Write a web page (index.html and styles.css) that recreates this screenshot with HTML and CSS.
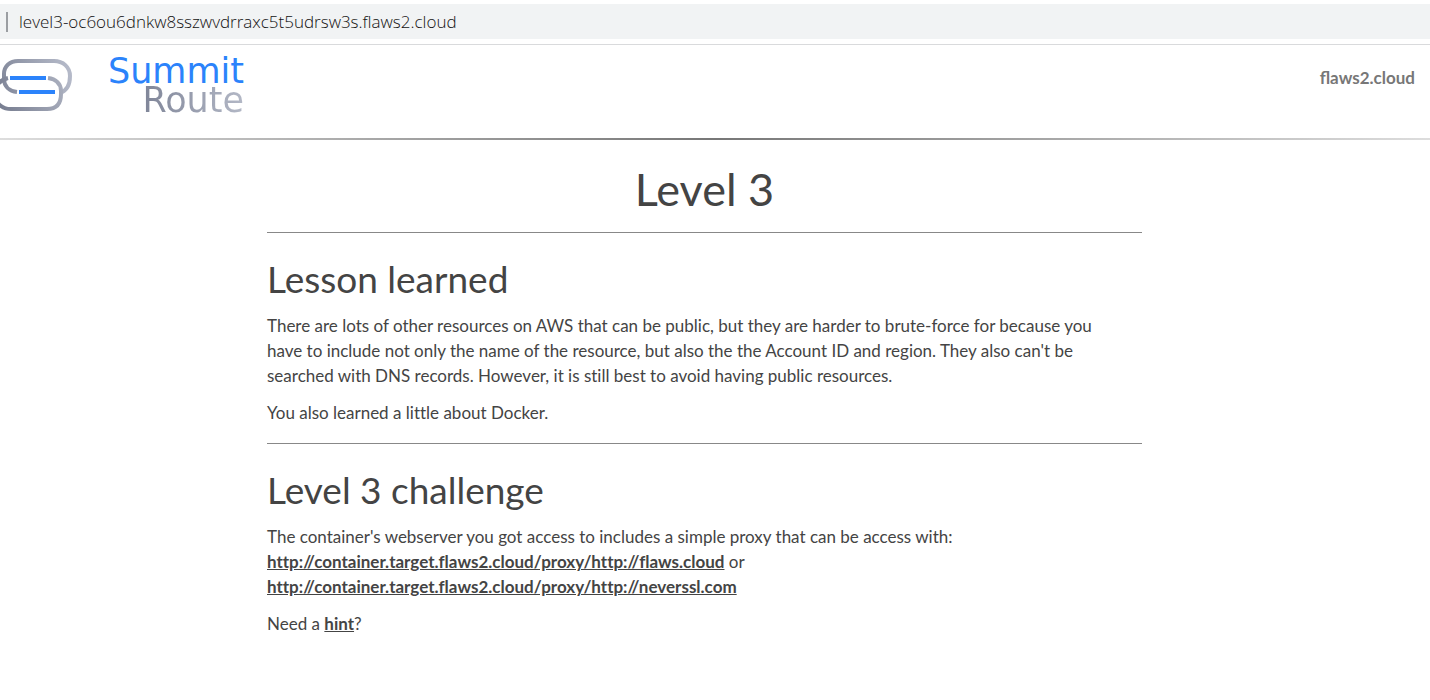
FILE: index.html
```html
<!DOCTYPE html>
<html lang="en">
<head>
<meta charset="utf-8">
<title>Level 3</title>
<link rel="stylesheet" href="styles.css">
</head>
<body>
<div class="address-bar"><span class="address">level3-oc6ou6dnkw8sszwvdrraxc5t5udrsw3s.flaws2.cloud</span></div>
<header class="site-header">
  <div class="brand">
    <svg class="brand-mark" width="72" height="56" viewBox="0 0 72 56" aria-hidden="true">
      <defs>
        <linearGradient id="upper" gradientUnits="userSpaceOnUse" x1="4" y1="28" x2="70" y2="12"><stop offset="0" stop-color="#858b9d"/><stop offset="1" stop-color="#b5bac9"/></linearGradient>
        <linearGradient id="lower" gradientUnits="userSpaceOnUse" x1="0" y1="52" x2="62" y2="30"><stop offset="0" stop-color="#777d90"/><stop offset="1" stop-color="#a8adbc"/></linearGradient>
      </defs>
      <g fill="none" stroke-width="4">
        <path stroke="url(#upper)" d="M17 35C9 34 4 29 4 22V17C4 9 10 4 18 4H54C63 4 70 10 70 19C70 28 66 34 60 36"/>
        <path stroke="url(#lower)" d="M48 21C56 22 61 27 61 34V37C61 47 56 52 47 52H11C2 52-5 46-5 37C-5 28 0 23 8 21"/>
      </g>
      <path fill="#2b83fb" d="M10 19h36v4H10zM19 33h36v4H19z"/>
    </svg>
    <div class="brand-name"><span class="brand-top">Summit</span><span class="brand-bottom">Route</span></div>
  </div>
  <a class="home-link" href="#">flaws2.cloud</a>
</header>
<main class="page">
  <article class="content">
    <h1>Level 3</h1>
    <hr>
    <h2>Lesson learned</h2>
    <p>There are lots of other resources on AWS that can be public, but they are harder to brute-force for because you have to include not only the name of the resource, but also the the Account ID and region. They also can't be searched with DNS records. However, it is still best to avoid having public resources.</p>
    <p>You also learned a little about Docker.</p>
    <hr>
    <h2>Level 3 challenge</h2>
    <p>The container's webserver you got access to includes a simple proxy that can be access with:<br>
    <a href="#">http://container.target.flaws2.cloud/proxy/http://flaws.cloud</a> or<br>
    <a href="#">http://container.target.flaws2.cloud/proxy/http://neverssl.com</a></p>
    <p>Need a <a href="#">hint</a>?</p>
  </article>
</main>
</body>
</html>
```
FILE: styles.css
```css
* { box-sizing: border-box; }
body {
  margin: 0;
  padding-top: 4px;
  background: #fff;
  color: #444;
  font: 17px/25px Lato, sans-serif;
}
.address-bar {
  display: flex;
  align-items: center;
  height: 35px;
  padding-left: 6px;
  background: #f1f3f4;
  color: #111;
  font: 300 17px/20px "Open Sans", sans-serif;
}
.address { border-left: 2px solid #9b9ea2; padding-left: 11px; }
.site-header {
  display: flex;
  justify-content: space-between;
  align-items: flex-start;
  margin-top: 5px;
  height: 96px;
  padding: 13px 15px 0 0;
  border-bottom: 2px solid;
  border-image: linear-gradient(to right, #ddd, #777 50%, #ddd) 1;
  border-image-width: 0 0 2px;
  box-shadow: inset 0 1px #d9dadc;
}
.brand { display: flex; }
.brand-name {
  display: flex;
  flex-direction: column;
  align-items: flex-end;
  width: 172px;
  font: 35px/29px "DejaVu Sans", sans-serif;
}
.brand-top { color: #2b83fb; }
.brand-bottom {
  background: linear-gradient(to right, #7f8598, #b3b8c6);
  background-clip: text;
  color: transparent;
}
.home-link {
  margin-top: 8px;
  color: #777;
  font-weight: 700;
  text-decoration: none;
}
.page { padding-right: 21px; }
.content {
  max-width: 875px;
  margin: 0 auto;
  font-variant-ligatures: none;
}
h1, h2 { margin: 0; font-weight: 400; }
h1 { padding-top: 24px; font-size: 45px; line-height: 50px; text-align: center; }
h2 { font-size: 37px; line-height: 44px; }
hr { margin: 18px 0 24px; border: 0; border-top: 1px solid #888; }
p { max-width: 850px; margin: 0 0 12px; }
h2 + p { margin-top: 12px; }
.content a { color: #444; font-weight: 700; }
```
